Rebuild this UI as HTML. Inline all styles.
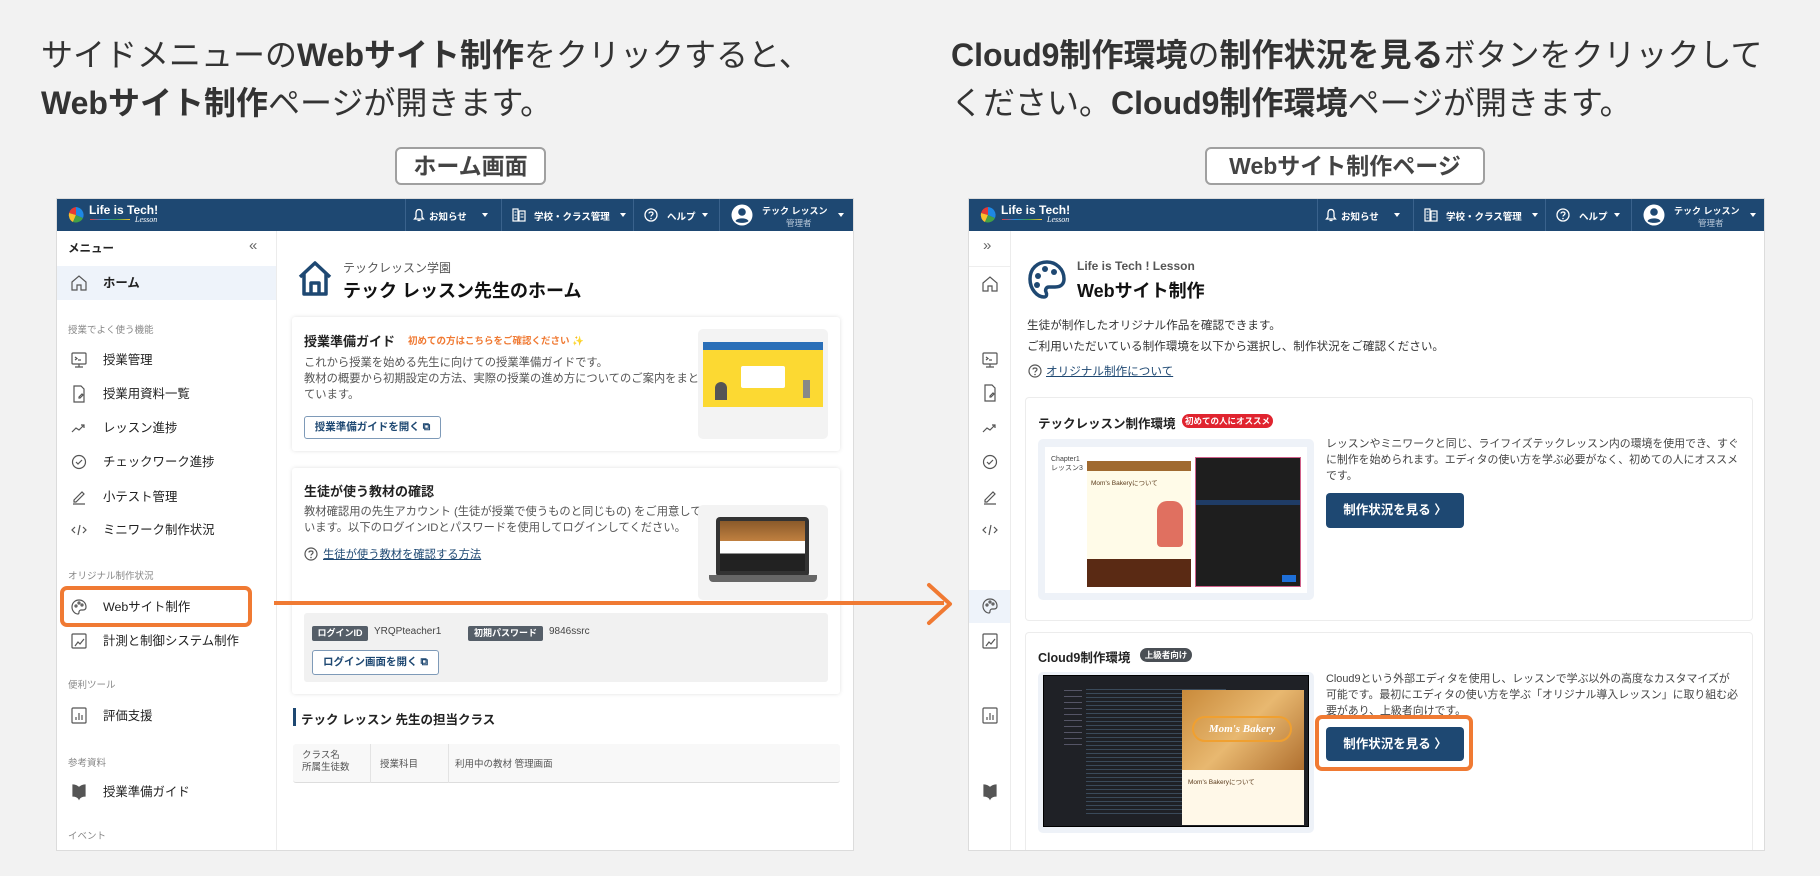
<!DOCTYPE html>
<html><head><meta charset="utf-8">
<style>
*{margin:0;padding:0;box-sizing:border-box}
body{width:1820px;height:876px;background:#f2f2f2;position:relative;overflow:hidden;font-family:"Liberation Sans","Noto Sans CJK JP",sans-serif;color:#333}
.a{position:absolute;white-space:nowrap}
.h{font-size:32px;color:#333;line-height:40px}
.h b{font-weight:700}
.lbl{position:absolute;top:147px;height:38px;border:2px solid #a0a0a0;border-radius:6px;background:#fff;font-size:23px;font-weight:700;color:#444;text-align:center;line-height:34px}
.shot{position:absolute;top:198px;height:653px;background:#fff;border:1px solid #dcdcdc;overflow:hidden}
.hdr{position:absolute;left:0;top:0;right:0;height:32px;background:#1e4872}
.hdr .t{position:absolute;color:#fff;font-size:9.5px;font-weight:700;top:10px;white-space:nowrap}
.hdr .dv{position:absolute;top:0;width:1px;height:32px;background:#3a628c}
.car{position:absolute;top:14px;width:0;height:0;border-left:3px solid transparent;border-right:3px solid transparent;border-top:4px solid #fff}
.si{position:absolute;font-size:12.4px;color:#222;white-space:nowrap;line-height:16px}
.sec{position:absolute;font-size:9.5px;color:#888;white-space:nowrap;line-height:12px}
.ic{position:absolute}
.card{position:absolute;background:#fff;box-shadow:0 0 4px rgba(0,0,0,.12);border-radius:3px}
.tx{position:absolute;font-size:11.3px;color:#555;white-space:nowrap;line-height:16px}
.btnb{position:absolute;border:1px solid #7e9ab8;border-radius:3px;background:#fff;color:#1e4872;font-size:10.5px;font-weight:700;text-align:center}
.btnf{position:absolute;background:#1e4872;color:#fff;border-radius:4px;font-size:12.5px;font-weight:700;text-align:center}
.or{position:absolute;border:4px solid #f07a33;border-radius:7px}
.sv{position:absolute;width:20px;height:20px}
.sv *{fill:none;stroke:#555;stroke-width:1.2}
</style></head><body>

<div class="a h" style="left:41px;top:35px">サイドメニューの<b>Webサイト制作</b>をクリックすると、</div>
<div class="a h" style="left:41px;top:83px"><b>Webサイト制作</b>ページが開きます。</div>
<div class="a h" style="left:951px;top:35px"><b>Cloud9制作環境</b>の<b>制作状況を見る</b>ボタンをクリックして</div>
<div class="a h" style="left:951px;top:83px">ください。<b>Cloud9制作環境</b>ページが開きます。</div>

<div class="lbl" style="left:395px;width:151px">ホーム画面</div>
<div class="lbl" style="left:1205px;width:280px">Webサイト制作ページ</div>

<!-- LEFT SCREEN -->
<div class="shot" style="left:56px;width:798px">
 <div class="hdr">
  <svg class="ic" style="left:10px;top:6px" width="18" height="20" viewBox="0 0 18 20"><path d="M9 2 A8 8 0 0 0 2 8 L9 10Z" fill="#e53935"/><path d="M2 8 A8 8 0 0 0 6 17 L9 10Z" fill="#fbc02d"/><path d="M6 17 A8 8 0 0 0 16 13 L9 10Z" fill="#43a047"/><path d="M16 13 A8 8 0 0 0 9 2 L9 10Z" fill="#1e88e5"/></svg>
  <div class="t" style="left:32px;top:4px;font-size:12px">Life is Tech!</div>
  <div class="a" style="left:33px;top:20px;width:40px;height:1px;background:linear-gradient(90deg,#e53935,#1e88e5,#43a047,#fbc02d)"></div>
  <div class="a" style="left:78px;top:16px;color:#fff;font-size:8px;font-style:italic;font-family:'Liberation Serif',serif">Lesson</div>
  <div class="dv" style="left:348px"></div><div class="dv" style="left:444px"></div><div class="dv" style="left:576px"></div><div class="dv" style="left:662px"></div>
  <svg class="ic" style="left:356px;top:9px" width="12" height="14" viewBox="0 0 12 14"><path d="M6 1.5C3.5 1.5 3 3.5 3 5.5V9L1.5 11H10.5L9 9V5.5C9 3.5 8.5 1.5 6 1.5ZM4.5 12.5H7.5" fill="none" stroke="#fff" stroke-width="1.3"/></svg>
  <div class="t" style="left:372px">お知らせ</div><div class="car" style="left:425px"></div>
  <svg class="ic" style="left:455px;top:9px" width="14" height="14" viewBox="0 0 14 14"><rect x="1" y="1" width="5" height="12" fill="none" stroke="#fff" stroke-width="1.2"/><rect x="7" y="3" width="6" height="10" fill="none" stroke="#fff" stroke-width="1.2"/><path d="M2.5 4h2M2.5 7h2M2.5 10h2M8.5 6h3M8.5 9h3" stroke="#fff"/></svg>
  <div class="t" style="left:477px">学校・クラス管理</div><div class="car" style="left:563px"></div>
  <svg class="ic" style="left:587px;top:9px" width="14" height="14" viewBox="0 0 14 14"><circle cx="7" cy="7" r="6" fill="none" stroke="#fff" stroke-width="1.3"/><path d="M5 5.5C5 3.5 9 3.5 9 5.5C9 7 7 7 7 8.5" fill="none" stroke="#fff" stroke-width="1.3"/><circle cx="7" cy="10.5" r=".8" fill="#fff"/></svg>
  <div class="t" style="left:610px">ヘルプ</div><div class="car" style="left:645px"></div>
  <svg class="ic" style="left:674px;top:5px" width="22" height="22" viewBox="0 0 22 22"><circle cx="11" cy="11" r="10.5" fill="#fff"/><circle cx="11" cy="8" r="3.8" fill="#1e4872"/><path d="M4.5 17C6 13.5 16 13.5 17.5 17C15.5 19.5 6.5 19.5 4.5 17Z" fill="#1e4872"/></svg>
  <div class="t" style="left:705px;top:5px;font-size:9px">テック レッスン</div>
  <div class="a" style="left:729px;top:18px;color:#b8c7d8;font-size:8.5px">管理者</div><div class="car" style="left:781px"></div>
 </div>
 <div class="a" style="left:0;top:32px;width:220px;height:621px;background:#fff;border-right:1px solid #ececec"></div>
 <div class="a" style="left:0;top:67px;width:219px;height:1px;background:#eee"></div>
 <div class="a" style="left:0;top:67px;width:219px;height:34px;background:#eef3fa"></div>
 <div class="si" style="left:11px;top:42px;font-size:11.5px;font-weight:700">メニュー</div>
 <div class="a" style="left:192px;top:38px;font-size:15px;color:#666">«</div>
 <div class="si" style="left:46px;top:76px;font-weight:700">ホーム</div>
 <svg class="sv" style="left:12px;top:74px" viewBox="0 0 20 20"><path d="M3 9L10 3L17 9V17H12V12H8V17H3Z"/></svg>
 <div class="sec" style="left:11px;top:126px">授業でよく使う機能</div>
 <div class="si" style="left:46px;top:153px">授業管理</div>
 <div class="si" style="left:46px;top:187px">授業用資料一覧</div>
 <div class="si" style="left:46px;top:221px">レッスン進捗</div>
 <div class="si" style="left:46px;top:255px">チェックワーク進捗</div>
 <div class="si" style="left:46px;top:290px">小テスト管理</div>
 <div class="si" style="left:46px;top:323px">ミニワーク制作状況</div>
 <div class="sec" style="left:11px;top:372px">オリジナル制作状況</div>
 <div class="si" style="left:46px;top:400px">Webサイト制作</div>
 <div class="si" style="left:46px;top:434px">計測と制御システム制作</div>
 <div class="sec" style="left:11px;top:481px">便利ツール</div>
 <div class="si" style="left:46px;top:509px">評価支援</div>
 <div class="sec" style="left:11px;top:559px">参考資料</div>
 <div class="si" style="left:46px;top:585px">授業準備ガイド</div>
 <div class="sec" style="left:11px;top:632px">イベント</div>
 <svg class="sv" style="left:12px;top:151px" viewBox="0 0 20 20"><rect x="3" y="3" width="14" height="11" rx="1"/><path d="M10 14v3M6 17h8M6 7l2 1.5L6 10M9 10h3"/></svg>
 <svg class="sv" style="left:12px;top:185px" viewBox="0 0 20 20"><path d="M5 2h7l3 3v13H5ZM10 13l3-3 1 1-3 3h-1z"/></svg>
 <svg class="sv" style="left:12px;top:219px" viewBox="0 0 20 20"><path d="M3 14l4-4 3 2 5-5M12 7h3v3"/></svg>
 <svg class="sv" style="left:12px;top:253px" viewBox="0 0 20 20"><circle cx="10" cy="10" r="6.5"/><path d="M7 10l2 2 4-4"/></svg>
 <svg class="sv" style="left:12px;top:288px" viewBox="0 0 20 20"><path d="M5 13l8-8 2 2-8 8H5ZM4 17h12"/></svg>
 <svg class="sv" style="left:12px;top:321px" viewBox="0 0 20 20"><path d="M6 7l-3 3 3 3M14 7l3 3-3 3M11 5l-2 10"/></svg>
 <svg class="sv" style="left:12px;top:398px" viewBox="0 0 20 20"><path d="M10 3c-4 0-7 3-7 7s3 7 6 7c1 0 1-1 1-2s1-2 2-2h2c2 0 3-1 3-3 0-4-3-7-7-7z"/><circle cx="7" cy="9" r="1"/><circle cx="10" cy="6" r="1"/><circle cx="13" cy="8" r="1"/></svg>
 <svg class="sv" style="left:12px;top:432px" viewBox="0 0 20 20"><rect x="3" y="3" width="14" height="14" rx="1"/><path d="M6 15l3-4 2 2 4-5"/></svg>
 <svg class="sv" style="left:12px;top:507px" viewBox="0 0 20 20"><rect x="3" y="2" width="14" height="15" rx="1"/><path d="M7 14v-3M10 14v-7M13 14v-5"/></svg>
 <svg class="sv" style="left:12px;top:583px" viewBox="0 0 20 20"><path d="M4 3c2 0 5 1 6 3 1-2 4-3 6-3v11c-2 0-5 1-6 3-1-2-4-3-6-3Z" style="fill:#555"/></svg>

 <svg class="ic" style="left:240px;top:60px" width="36" height="38" viewBox="0 0 36 38"><path d="M3 18L18 4L33 18M7 15V35H29V15M14 35V24H22V35" fill="none" stroke="#1e4872" stroke-width="3.5" stroke-linejoin="round"/></svg>
 <div class="a" style="left:286px;top:60px;font-size:12px;color:#555">テックレッスン学園</div>
 <div class="a" style="left:286px;top:78px;font-size:18px;font-weight:700;color:#111">テック レッスン先生のホーム</div>

 <div class="card" style="left:235px;top:118px;width:548px;height:134px"></div>
 <div class="a" style="left:247px;top:132px;font-size:13px;font-weight:700;color:#222">授業準備ガイド</div>
 <div class="a" style="left:351px;top:134px;font-size:9.5px;font-weight:700;color:#f07a33">初めての方はこちらをご確認ください <span style="color:#f5d76e">✨</span></div>
 <div class="tx" style="left:247px;top:156px">これから授業を始める先生に向けての授業準備ガイドです。<br>教材の概要から初期設定の方法、実際の授業の進め方についてのご案内をまとめ<br>ています。</div>
 <div class="btnb" style="left:247px;top:217px;width:137px;height:23px;line-height:21px">授業準備ガイドを開く ⧉</div>
 <div class="a" style="left:641px;top:130px;width:130px;height:110px;background:#f3f3f3;border-radius:5px"></div>
 <div class="a" style="left:646px;top:143px;width:120px;height:65px;background:#fcd932"><div style="height:8px;background:#2a6fb8"></div><div style="position:absolute;left:38px;top:24px;width:44px;height:22px;background:#fff;border-radius:2px"></div><div style="position:absolute;left:12px;top:40px;width:12px;height:18px;background:#555;border-radius:6px 6px 0 0"></div><div style="position:absolute;left:100px;top:38px;width:7px;height:18px;background:#888"></div></div>

 <div class="card" style="left:235px;top:269px;width:548px;height:226px"></div>
 <div class="a" style="left:247px;top:282px;font-size:13px;font-weight:700;color:#222">生徒が使う教材の確認</div>
 <div class="tx" style="left:247px;top:305px">教材確認用の先生アカウント (生徒が授業で使うものと同じもの) をご用意して<br>います。以下のログインIDとパスワードを使用してログインしてください。</div>
 <svg class="ic" style="left:247px;top:348px" width="14" height="14" viewBox="0 0 14 14"><circle cx="7" cy="7" r="6" fill="none" stroke="#555" stroke-width="1.2"/><path d="M5 5.5C5 3.5 9 3.5 9 5.5C9 7 7 7 7 8.5" fill="none" stroke="#555" stroke-width="1.2"/><circle cx="7" cy="10.5" r=".8" fill="#555"/></svg>
 <div class="a" style="left:266px;top:347px;font-size:11.3px;color:#1e4872;text-decoration:underline">生徒が使う教材を確認する方法</div>
 <div class="a" style="left:641px;top:306px;width:130px;height:95px;background:#f3f3f3;border-radius:5px"></div>
 <div class="a" style="left:659px;top:318px;width:93px;height:60px;background:#333;border-radius:4px"><div style="margin:4px;height:50px;background:linear-gradient(#8a5a2a 0,#c08040 40%,#fff 40%,#fff 65%,#222 65%)"></div></div>
 <div class="a" style="left:652px;top:376px;width:108px;height:7px;background:#666;border-radius:0 0 4px 4px"></div>
 <div class="a" style="left:247px;top:414px;width:524px;height:69px;background:#f1f1f1;border-radius:3px"></div>
 <div class="a" style="left:255px;top:427px;width:56px;height:15px;background:#555e68;color:#fff;font-size:9px;font-weight:700;line-height:15px;text-align:center;border-radius:2px">ログインID</div>
 <div class="a" style="left:317px;top:427px;font-size:10px;color:#444">YRQPteacher1</div>
 <div class="a" style="left:411px;top:427px;width:75px;height:15px;background:#555e68;color:#fff;font-size:9px;font-weight:700;line-height:15px;text-align:center;border-radius:2px">初期パスワード</div>
 <div class="a" style="left:492px;top:427px;font-size:10px;color:#444">9846ssrc</div>
 <div class="btnb" style="left:255px;top:451px;width:127px;height:25px;line-height:23px">ログイン画面を開く ⧉</div>

 <div class="a" style="left:236px;top:509px;width:3px;height:18px;background:#1e4872"></div>
 <div class="a" style="left:244px;top:510px;font-size:12.5px;font-weight:700;color:#222">テック レッスン 先生の担当クラス</div>
 <div class="a" style="left:236px;top:545px;width:547px;height:39px;background:#f8f8f8;border-bottom:1px solid #ddd;border-radius:3px"></div>
 <div class="a" style="left:313px;top:545px;width:1px;height:39px;background:#e3e3e3"></div>
 <div class="a" style="left:391px;top:545px;width:1px;height:39px;background:#e3e3e3"></div>
 <div class="a" style="left:245px;top:551px;font-size:9.5px;color:#555;line-height:12px">クラス名<br>所属生徒数</div>
 <div class="a" style="left:323px;top:557px;font-size:9.5px;color:#555">授業科目</div>
 <div class="a" style="left:398px;top:557px;font-size:9.5px;color:#555">利用中の教材 管理画面</div>
</div>

<!-- RIGHT SCREEN -->
<div class="shot" style="left:968px;width:797px">
 <div class="hdr">
  <svg class="ic" style="left:10px;top:6px" width="18" height="20" viewBox="0 0 18 20"><path d="M9 2 A8 8 0 0 0 2 8 L9 10Z" fill="#e53935"/><path d="M2 8 A8 8 0 0 0 6 17 L9 10Z" fill="#fbc02d"/><path d="M6 17 A8 8 0 0 0 16 13 L9 10Z" fill="#43a047"/><path d="M16 13 A8 8 0 0 0 9 2 L9 10Z" fill="#1e88e5"/></svg>
  <div class="t" style="left:32px;top:4px;font-size:12px">Life is Tech!</div>
  <div class="a" style="left:33px;top:20px;width:40px;height:1px;background:linear-gradient(90deg,#e53935,#1e88e5,#43a047,#fbc02d)"></div>
  <div class="a" style="left:78px;top:16px;color:#fff;font-size:8px;font-style:italic;font-family:'Liberation Serif',serif">Lesson</div>
  <div class="dv" style="left:348px"></div><div class="dv" style="left:444px"></div><div class="dv" style="left:576px"></div><div class="dv" style="left:662px"></div>
  <svg class="ic" style="left:356px;top:9px" width="12" height="14" viewBox="0 0 12 14"><path d="M6 1.5C3.5 1.5 3 3.5 3 5.5V9L1.5 11H10.5L9 9V5.5C9 3.5 8.5 1.5 6 1.5ZM4.5 12.5H7.5" fill="none" stroke="#fff" stroke-width="1.3"/></svg>
  <div class="t" style="left:372px">お知らせ</div><div class="car" style="left:425px"></div>
  <svg class="ic" style="left:455px;top:9px" width="14" height="14" viewBox="0 0 14 14"><rect x="1" y="1" width="5" height="12" fill="none" stroke="#fff" stroke-width="1.2"/><rect x="7" y="3" width="6" height="10" fill="none" stroke="#fff" stroke-width="1.2"/><path d="M2.5 4h2M2.5 7h2M2.5 10h2M8.5 6h3M8.5 9h3" stroke="#fff"/></svg>
  <div class="t" style="left:477px">学校・クラス管理</div><div class="car" style="left:563px"></div>
  <svg class="ic" style="left:587px;top:9px" width="14" height="14" viewBox="0 0 14 14"><circle cx="7" cy="7" r="6" fill="none" stroke="#fff" stroke-width="1.3"/><path d="M5 5.5C5 3.5 9 3.5 9 5.5C9 7 7 7 7 8.5" fill="none" stroke="#fff" stroke-width="1.3"/><circle cx="7" cy="10.5" r=".8" fill="#fff"/></svg>
  <div class="t" style="left:610px">ヘルプ</div><div class="car" style="left:645px"></div>
  <svg class="ic" style="left:674px;top:5px" width="22" height="22" viewBox="0 0 22 22"><circle cx="11" cy="11" r="10.5" fill="#fff"/><circle cx="11" cy="8" r="3.8" fill="#1e4872"/><path d="M4.5 17C6 13.5 16 13.5 17.5 17C15.5 19.5 6.5 19.5 4.5 17Z" fill="#1e4872"/></svg>
  <div class="t" style="left:705px;top:5px;font-size:9px">テック レッスン</div>
  <div class="a" style="left:729px;top:18px;color:#b8c7d8;font-size:8.5px">管理者</div><div class="car" style="left:781px"></div>
 </div>
 <div class="a" style="left:0;top:32px;width:42px;height:621px;background:#fff;border-right:1px solid #ececec"></div>
 <div class="a" style="left:0;top:67px;width:41px;height:1px;background:#eee"></div>
 <div class="a" style="left:0;top:391px;width:41px;height:33px;background:#eef3fa"></div>
 <div class="a" style="left:14px;top:38px;font-size:15px;color:#666">»</div>
 <svg class="sv" style="left:11px;top:75px" viewBox="0 0 20 20"><path d="M3 9L10 3L17 9V17H12V12H8V17H3Z"/></svg>
 <svg class="sv" style="left:11px;top:151px" viewBox="0 0 20 20"><rect x="3" y="3" width="14" height="11" rx="1"/><path d="M10 14v3M6 17h8M6 7l2 1.5L6 10M9 10h3"/></svg>
 <svg class="sv" style="left:11px;top:184px" viewBox="0 0 20 20"><path d="M5 2h7l3 3v13H5ZM10 13l3-3 1 1-3 3h-1z"/></svg>
 <svg class="sv" style="left:11px;top:219px" viewBox="0 0 20 20"><path d="M3 14l4-4 3 2 5-5M12 7h3v3"/></svg>
 <svg class="sv" style="left:11px;top:253px" viewBox="0 0 20 20"><circle cx="10" cy="10" r="6.5"/><path d="M7 10l2 2 4-4"/></svg>
 <svg class="sv" style="left:11px;top:288px" viewBox="0 0 20 20"><path d="M5 13l8-8 2 2-8 8H5ZM4 17h12"/></svg>
 <svg class="sv" style="left:11px;top:321px" viewBox="0 0 20 20"><path d="M6 7l-3 3 3 3M14 7l3 3-3 3M11 5l-2 10"/></svg>
 <svg class="sv" style="left:11px;top:397px" viewBox="0 0 20 20"><path d="M10 3c-4 0-7 3-7 7s3 7 6 7c1 0 1-1 1-2s1-2 2-2h2c2 0 3-1 3-3 0-4-3-7-7-7z"/><circle cx="7" cy="9" r="1"/><circle cx="10" cy="6" r="1"/><circle cx="13" cy="8" r="1"/></svg>
 <svg class="sv" style="left:11px;top:432px" viewBox="0 0 20 20"><rect x="3" y="3" width="14" height="14" rx="1"/><path d="M6 15l3-4 2 2 4-5"/></svg>
 <svg class="sv" style="left:11px;top:507px" viewBox="0 0 20 20"><rect x="3" y="2" width="14" height="15" rx="1"/><path d="M7 14v-3M10 14v-7M13 14v-5"/></svg>
 <svg class="sv" style="left:11px;top:583px" viewBox="0 0 20 20"><path d="M4 3c2 0 5 1 6 3 1-2 4-3 6-3v11c-2 0-5 1-6 3-1-2-4-3-6-3Z" style="fill:#555"/></svg>

 <svg class="ic" style="left:58px;top:60px" width="40" height="42" viewBox="0 0 40 42"><path d="M20 3C10 3 3 10 3 20s7 18 14 18c3 0 3-3 2-5s0-5 3-5h6c6 0 9-3 9-8C37 10 29 3 20 3Z" fill="none" stroke="#1e4872" stroke-width="3.5"/><circle cx="11" cy="17" r="3" fill="#1e4872"/><circle cx="18" cy="10" r="3" fill="#1e4872"/><circle cx="27" cy="13" r="3" fill="#1e4872"/><circle cx="10" cy="26" r="3" fill="#1e4872"/></svg>
 <div class="a" style="left:108px;top:60px;font-size:12px;color:#555;font-weight:700">Life is Tech ! Lesson</div>
 <div class="a" style="left:108px;top:78px;font-size:18px;font-weight:700;color:#111">Webサイト制作</div>
 <div class="tx" style="left:58px;top:116px;line-height:21px;color:#333;font-size:11.6px">生徒が制作したオリジナル作品を確認できます。<br>ご利用いただいている制作環境を以下から選択し、制作状況をご確認ください。</div>
 <svg class="ic" style="left:59px;top:165px" width="14" height="14" viewBox="0 0 14 14"><circle cx="7" cy="7" r="6" fill="none" stroke="#555" stroke-width="1.2"/><path d="M5 5.5C5 3.5 9 3.5 9 5.5C9 7 7 7 7 8.5" fill="none" stroke="#555" stroke-width="1.2"/><circle cx="7" cy="10.5" r=".8" fill="#555"/></svg>
 <div class="a" style="left:77px;top:164px;font-size:11.6px;color:#1e4872;text-decoration:underline">オリジナル制作について</div>

 <div class="card" style="left:57px;top:199px;width:726px;height:222px;box-shadow:0 0 0 1px #ececec"></div>
 <div class="a" style="left:69px;top:214px;font-size:12.5px;font-weight:700;color:#222">テックレッスン制作環境</div>
 <div class="a" style="left:213px;top:215px;width:91px;height:14px;background:#e0242f;color:#fff;font-size:8.5px;font-weight:700;text-align:center;line-height:14px;border-radius:7px">初めての人にオススメ</div>
 <div class="a" style="left:69px;top:240px;width:276px;height:161px;background:#eef2f8;border-radius:5px"></div>
 <div class="a" style="left:76px;top:248px;width:262px;height:146px;background:#fff">
  <div style="position:absolute;left:6px;top:8px;font-size:7px;color:#444;line-height:9px">Chapter1<br>レッスン3</div>
  <div style="position:absolute;left:42px;top:14px;width:104px;height:126px;background:#fffbe8"><div style="height:10px;background:#a06a30"></div><div style="position:absolute;left:4px;top:16px;font-size:6.5px;color:#5a3a1a">Mom's Bakeryについて</div><div style="position:absolute;left:70px;top:40px;width:26px;height:46px;background:#e07060;border-radius:10px 10px 4px 4px"></div><div style="position:absolute;left:0;bottom:0;width:104px;height:28px;background:#5a2a14"></div></div>
  <div style="position:absolute;left:150px;top:10px;width:106px;height:130px;background:#1e1e1e;border:1px solid #d0608a"><div style="position:absolute;left:0;top:42px;width:104px;height:5px;background:#1f3c66"></div><div style="position:absolute;right:4px;bottom:4px;width:14px;height:7px;background:#1e6fd8"></div></div>
 </div>
 <div class="tx" style="left:357px;top:237px;color:#444;font-size:10.9px">レッスンやミニワークと同じ、ライフイズテックレッスン内の環境を使用でき、すぐ<br>に制作を始められます。エディタの使い方を学ぶ必要がなく、初めての人にオススメ<br>です。</div>
 <div class="btnf" style="left:357px;top:294px;width:138px;height:35px;line-height:35px">制作状況を見る 〉</div>

 <div class="card" style="left:57px;top:434px;width:726px;height:230px;box-shadow:0 0 0 1px #ececec"></div>
 <div class="a" style="left:69px;top:448px;font-size:12.5px;font-weight:700;color:#222">Cloud9制作環境</div>
 <div class="a" style="left:171px;top:449px;width:52px;height:14px;background:#4a4f55;color:#fff;font-size:8.5px;font-weight:700;text-align:center;line-height:14px;border-radius:7px">上級者向け</div>
 <div class="a" style="left:69px;top:473px;width:276px;height:161px;background:#eef2f8;border-radius:5px"></div>
 <div class="a" style="left:74px;top:476px;width:266px;height:152px;background:#1f2126;border:1px solid #000">
  <div style="position:absolute;left:20px;top:14px;width:18px;height:60px;background:repeating-linear-gradient(#556 0 1px,transparent 1px 6px)"></div>
  <div style="position:absolute;left:42px;top:10px;width:140px;height:130px;background:repeating-linear-gradient(transparent 0 3px,#3a4a5a 3px 4px)"></div>
  <div style="position:absolute;left:138px;top:14px;width:122px;height:135px;background:#fff8e8"><div style="height:80px;background:linear-gradient(135deg,#c98a3a,#e8b870,#b07030)"></div><div style="position:absolute;left:10px;top:26px;width:100px;height:26px;border:2px solid #f0a030;border-radius:13px;color:#fff;font-size:11px;font-weight:700;font-style:italic;text-align:center;line-height:22px;font-family:'Liberation Serif',serif">Mom's Bakery</div><div style="position:absolute;left:6px;top:86px;font-size:6.5px;color:#5a3a1a">Mom's Bakeryについて</div></div>
 </div>
 <div class="tx" style="left:357px;top:472px;color:#444;font-size:10.9px">Cloud9という外部エディタを使用し、レッスンで学ぶ以外の高度なカスタマイズが<br>可能です。最初にエディタの使い方を学ぶ「オリジナル導入レッスン」に取り組む必<br>要があり、上級者向けです。</div>
 <div class="btnf" style="left:357px;top:528px;width:138px;height:34px;line-height:34px">制作状況を見る 〉</div>
</div>

<div class="or" style="left:60px;top:586px;width:192px;height:41px"></div>
<div class="or" style="left:1315px;top:715px;width:158px;height:56px"></div>
<div class="a" style="left:274px;top:601px;width:670px;height:4px;background:#f07a33"></div>
<svg class="ic" style="left:926px;top:582px" width="28" height="44" viewBox="0 0 28 44"><path d="M3 3L24 22L3 41" fill="none" stroke="#f07a33" stroke-width="4" stroke-linejoin="round" stroke-linecap="round"/></svg>
</body></html>
